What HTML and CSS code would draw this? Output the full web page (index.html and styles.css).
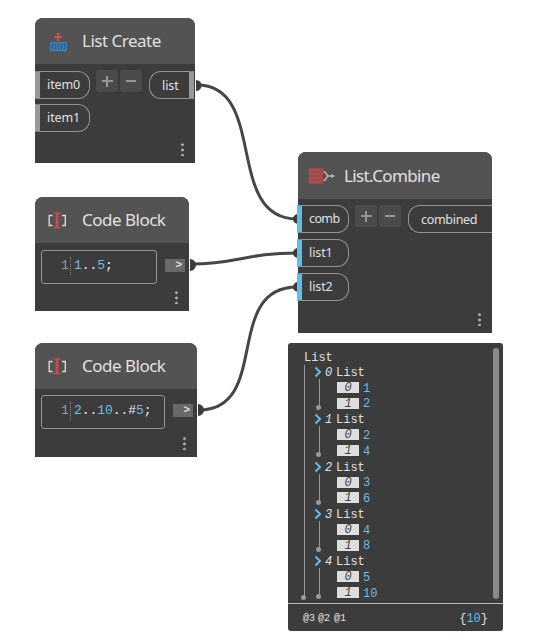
FILE: index.html
```html
<!DOCTYPE html>
<html lang="en">
<head>
<meta charset="utf-8">
<title>Node graph</title>
<link rel="stylesheet" href="styles.css">
</head>
<body>
<main class="canvas">
  <section class="node create">
    <header><svg class="icon" width="22" height="22" viewBox="0 0 22 22"><path d="M11 3v8M7 7h8" stroke="#d05050" stroke-width="2.2"/><rect x="3" y="12" width="17" height="9" fill="#32618c"/><path d="M3 12.700h17M3 20.500h17M3.700 12v9M7 12v9M10 12v9M13 12v9M16 12v9M19.300 12v9" stroke="#3f7fb8" stroke-width="1.300"/></svg><h2>List Create</h2></header>
    <div class="body">
      <div class="ports"><span class="port in">item0</span><span class="port in">item1</span></div>
      <div class="buttons"><button class="plus"></button><button class="minus"></button></div>
      <span class="port out">list</span>
    </div>
    <i class="more"></i>
  </section>

  <section class="node code first">
    <header><svg class="icon" width="22" height="22" viewBox="0 0 22 22"><path d="M5.500 6.500H2.200v10h3.300M15 6.500h3.300v10H15" fill="none" stroke="#d8d8d8" stroke-width="1.400"/><path d="M6.500 4h7M6.500 18.500h7" stroke="#c94b4b" stroke-width="1.500"/><path d="M10 4v14.500" stroke="#c94b4b" stroke-width="2.800"/></svg><h2>Code Block</h2></header>
    <div class="body">
      <div class="editor"><span class="line">1</span><code><b>1</b>..<b>5</b>;</code></div>
      <span class="result">&gt;</span>
    </div>
    <i class="more"></i>
  </section>

  <section class="node code second">
    <header><svg class="icon" width="22" height="22" viewBox="0 0 22 22"><path d="M5.500 6.500H2.200v10h3.300M15 6.500h3.300v10H15" fill="none" stroke="#d8d8d8" stroke-width="1.400"/><path d="M6.500 4h7M6.500 18.500h7" stroke="#c94b4b" stroke-width="1.500"/><path d="M10 4v14.500" stroke="#c94b4b" stroke-width="2.800"/></svg><h2>Code Block</h2></header>
    <div class="body">
      <div class="editor"><span class="line">1</span><code><b>2</b>..<b>10</b>..#<b>5</b>;</code></div>
      <span class="result">&gt;</span>
    </div>
    <i class="more"></i>
  </section>

  <svg class="wires" width="536" height="642" viewBox="0 0 536 642">
    <g fill="none" stroke="#464646" stroke-width="3"><path d="M197 85C268 85 224 219 297 219"/><path d="M191 264C237 264 246 253 297 253"/><path d="M199 410C271 410 223 287 297 287"/></g>
    <g fill="#3c3c3c"><path d="M196 80a5 5 0 0 1 0 11zM190 259a6 6 0 0 1 0 12zM198 404a6 6 0 0 1 0 12zM298 214a5 5 0 0 0 0 10zM298 248a5 5 0 0 0 0 10zM298 282a5 5 0 0 0 0 10z"/></g>
  </svg>

  <section class="node combine">
    <header><svg class="icon" width="28" height="22" viewBox="0 0 28 22"><path d="M1 3.500h14v7H1zM1 11.500h14v7H1z" fill="#b94c4d"/><path d="M1.500 6h13M1.500 8h13M1.500 14h13M1.500 16h13" stroke="#924346" stroke-width=".8"/><path d="M15.500 6.500q2 0 2.500 2l2 2.500-2 2.500q-.5 2-2.500 2M20 11h6" fill="none" stroke="#b5b5b5" stroke-width="1.500"/><path d="M23 9l4 2-4 2z" fill="#b5b5b5"/></svg><h2>List.Combine</h2></header>
    <div class="body">
      <div class="ports"><span class="port in">comb</span><span class="port in">list1</span><span class="port in">list2</span></div>
      <div class="buttons"><button class="plus"></button><button class="minus"></button></div>
      <span class="port out">combined</span>
    </div>
    <i class="more"></i>
  </section>

  <section class="preview">
    <div class="tree">
      <div class="root">List</div>
      <div class="groups">
        <div class="group"><div class="rail"><svg width="8" height="12" viewBox="0 0 8 12"><path d="M1.500 1.500L6 6l-4.500 4.500"/></svg></div><div class="items"><p><em>0</em>List</p><p class="item"><i>0</i><b>1</b></p><p class="item"><i>1</i><b>2</b></p></div></div>
        <div class="group"><div class="rail"><svg width="8" height="12" viewBox="0 0 8 12"><path d="M1.500 1.500L6 6l-4.500 4.500"/></svg></div><div class="items"><p><em>1</em>List</p><p class="item"><i>0</i><b>2</b></p><p class="item"><i>1</i><b>4</b></p></div></div>
        <div class="group"><div class="rail"><svg width="8" height="12" viewBox="0 0 8 12"><path d="M1.500 1.500L6 6l-4.500 4.500"/></svg></div><div class="items"><p><em>2</em>List</p><p class="item"><i>0</i><b>3</b></p><p class="item"><i>1</i><b>6</b></p></div></div>
        <div class="group"><div class="rail"><svg width="8" height="12" viewBox="0 0 8 12"><path d="M1.500 1.500L6 6l-4.500 4.500"/></svg></div><div class="items"><p><em>3</em>List</p><p class="item"><i>0</i><b>4</b></p><p class="item"><i>1</i><b>8</b></p></div></div>
        <div class="group"><div class="rail"><svg width="8" height="12" viewBox="0 0 8 12"><path d="M1.500 1.500L6 6l-4.500 4.500"/></svg></div><div class="items"><p><em>4</em>List</p><p class="item"><i>0</i><b>5</b></p><p class="item"><i>1</i><b>10</b></p></div></div>
      </div>
      <div class="scrollbar"></div>
    </div>
    <footer><div class="levels"><span>@3</span><span>@2</span><span>@1</span></div><div class="count">{<b>10</b>}</div></footer>
  </section>
</main>
</body>
</html>
```

FILE: styles.css
```css
* { box-sizing: border-box; }
body { margin: 0; background: #fff; }
.canvas { position: relative; width: 536px; height: 642px; overflow: hidden; font: 13px/1 "Noto Sans", sans-serif; color: #e0e0e0; }
.wires { position: absolute; inset: 0; }
.node { position: absolute; background: #3c3c3c; border-radius: 8px 8px 0 0; }
.create { left: 35px; top: 18px; width: 160px; height: 145px; }
.first { left: 35px; top: 197px; width: 154px; height: 114px; }
.second { left: 35px; top: 343px; width: 162px; height: 114px; }
.combine { left: 298px; top: 152px; width: 194px; height: 181px; }
.node header { display: flex; align-items: center; gap: 13px; height: 46px; padding-left: 12px; background: #535353; border-radius: 8px 8px 0 0; }
.combine header { height: 47px; padding-left: 10px; gap: 8px; }
h2 { margin: 0; font-size: 17px; font-weight: 400; line-height: 24px; letter-spacing: -.5px; white-space: nowrap; }
.create h2 { letter-spacing: -.5px; }
.combine h2 { letter-spacing: -.62px; }
.code h2 { letter-spacing: -.5px; }
.icon { flex: none; }
.body { display: flex; align-items: flex-start; padding-top: 7px; }
.combine .body { padding-top: 6px; margin-left: -1px; }
.ports { display: flex; flex-direction: column; gap: 6px; width: 55px; }
.create .ports { gap: 5px; }
.combine .ports { width: 52px; }
.port { display: block; height: 28px; border: 1px solid #959595; font-size: 12.5px; line-height: 25px; letter-spacing: -.1px; white-space: nowrap; }
.in { border-left: 5px solid #999; border-radius: 0 12px 12px 0; padding-left: 7px; }
.combine .in { border-left-color: #62bce8; }
.out { border-radius: 12px 0 0 12px; border-right: 5px solid #999; width: 45px; margin-left: 7px; padding-left: 12px; line-height: 27px; }
.combine .out { width: 84px; border-right: 0; padding-left: 12px; letter-spacing: -.3px; }
.combine .in:first-child { letter-spacing: -.6px; }
.create .ports { width: 55px; }
.buttons { display: flex; gap: 2px; margin-left: 6px; }
button { border: 0; padding: 0; width: 22px; height: 22px; border-radius: 3px; background: linear-gradient(#959595, #959595) center / 10px 2px no-repeat #4b4b4b; }
.create .buttons { margin-top: -1px; }
.plus { background: linear-gradient(#959595, #959595) center / 11px 2px no-repeat, linear-gradient(#959595, #959595) center / 2px 11px no-repeat, #4b4b4b; }
.more { position: absolute; right: 11px; bottom: 7px; width: 3px; height: 14px; background: radial-gradient(circle, #aaa 1.1px, transparent 1.7px) 0 0 / 3px 5.3px repeat-y; }
.code .body { align-items: center; padding: 6px 4px 0 6px; justify-content: space-between; }
.first .body { padding-top: 7px; }
.editor { display: flex; align-items: center; width: 116px; height: 34px; border: 1px solid #959595; border-radius: 3px; padding: 0 0 3px 19px; font: 13px/18px "Liberation Mono", monospace; }
.second .editor { width: 124px; }
.line { width: 10px; color: #999; border-right: 1px dotted #888; }
.editor code { margin-left: 3px; font: inherit; letter-spacing: -.05px; color: #eee; }
b { font-weight: 400; color: #6dbde5; }
.result { width: 20px; height: 13px; margin-top: -3px; background: #696969; padding-right: 3px; text-align: right; font: bold 11px/13px "Liberation Mono", monospace; }
.preview { position: absolute; left: 288px; top: 343px; width: 215px; height: 288px; background: #3c3c3c; border-radius: 3px; font: 12px/16px "Liberation Mono", monospace; }
.tree { position: relative; height: 261px; border-bottom: 1px solid #bbb; padding: 7px 0 0 16px; }
.root { height: 15px; }
.groups { position: relative; width: 100px; height: 236px; }
.groups::before { content: ""; position: absolute; left: 0; top: 0; bottom: 4px; width: 1px; background: #989898; }
.groups::after { content: ""; position: absolute; left: -3px; bottom: 1px; width: 5px; height: 5px; border-radius: 50%; background: #999; }
.group { display: flex; height: 47.3px; padding-left: 10px; }
.rail { position: relative; width: 10px; height: 47px; }
.rail::before { content: ""; position: absolute; left: 5px; top: 14px; bottom: 4px; width: 1px; background: #989898; }
.rail::after { content: ""; position: absolute; left: 2px; bottom: 2px; width: 5px; height: 5px; border-radius: 50%; background: #999; }
.rail svg { display: block; margin-top: 1px; fill: none; stroke: #62bce8; stroke-width: 2; }
p { margin: 0; height: 15.75px; line-height: 16px; white-space: nowrap; }
em { display: inline-block; width: 12px; padding-left: 1px; }
.item { display: flex; align-items: center; padding-left: 13px; }
.item i { width: 22px; height: 11px; margin: -2px 4px 0 0; background: #dedede; color: #444; line-height: 12px; text-align: center; }
.scrollbar { position: absolute; right: 4px; top: 5px; width: 6px; height: 251px; border-radius: 3px; background: #8a8a8a; }
footer { display: flex; justify-content: space-between; align-items: center; height: 27px; padding: 2px 15px 0; }
.levels { display: flex; font-size: 10px; }
.levels span { width: 15px; }
.levels span:last-child { margin-left: 1px; }
```
